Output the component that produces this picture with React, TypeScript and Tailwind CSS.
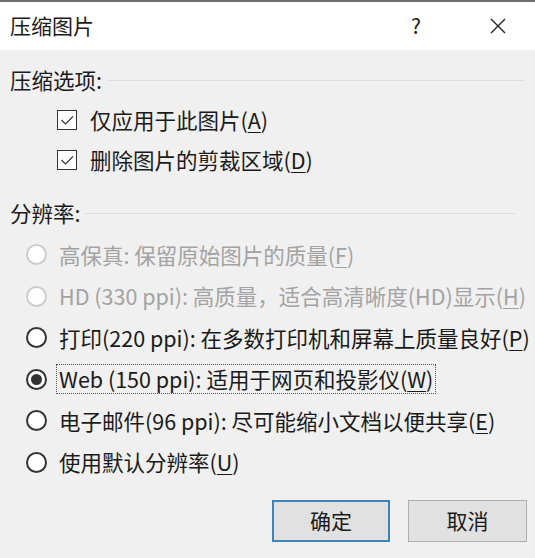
import React from "react";

const font = { fontFamily: '"Noto Sans CJK SC", "Noto Sans", sans-serif' };

function Check() {
  return (
    <span className="w-[20px] h-[20px] border border-[#333] bg-white flex items-center justify-center shrink-0">
      <svg width="18" height="18" viewBox="0 0 18 18">
        <path d="M3.5 9 L7.5 13 L15 5.5" fill="none" stroke="#333" strokeWidth="1.1" />
      </svg>
    </span>
  );
}

function Radio({ checked, disabled }: { checked?: boolean; disabled?: boolean }) {
  return (
    <span
      className={
        "w-[21px] h-[21px] rounded-full bg-white flex items-center justify-center shrink-0 border-2 " +
        (disabled ? "border-[#cccccc]" : "border-[#333333]")
      }
    >
      {checked && <span className="w-[11px] h-[11px] rounded-full bg-[#333333]" />}
    </span>
  );
}

function U({ children }: { children: React.ReactNode }) {
  return <span className="underline underline-offset-[3px] decoration-1">{children}</span>;
}

function RadioRow({
  children,
  checked,
  disabled,
  focus,
}: {
  children: React.ReactNode;
  checked?: boolean;
  disabled?: boolean;
  focus?: boolean;
}) {
  return (
    <div className="h-[41.5px] flex items-center pl-[26px]">
      <Radio checked={checked} disabled={disabled} />
      <span
        className={
          "ml-[9px] h-[30px] flex items-center px-[2px] " +
          (focus ? "border border-dotted border-[#555]" : "border border-transparent") +
          (disabled ? " text-[#a3a3a3]" : " text-[#1a1a1a]")
        }
      >
        {children}
      </span>
    </div>
  );
}

export default function App() {
  return (
    <div className="w-[535px] h-[558px] bg-[#f0f0f0] flex flex-col overflow-hidden" style={font}>
      <div className="h-[2px] bg-[#6e6e6e]" />
      <div className="h-[48px] bg-white flex items-center pl-[10px] text-[21px] text-[#1a1a1a]">
        <span>压缩图片</span>
        <span className="ml-auto text-[21px] mr-[69px]">?</span>
        <svg width="16" height="16" viewBox="0 0 16 16" className="mr-[29px]">
          <path d="M1 1 L15 15 M15 1 L1 15" stroke="#222" strokeWidth="1.4" />
        </svg>
      </div>
      <div className="flex flex-col text-[21.5px] text-[#1a1a1a] pt-[10px]">
        <div className="h-[40px] flex items-center pl-[10px] pr-[10px]">
          <span>压缩选项:</span>
          <span className="flex-1 h-px bg-[#dcdcdc] ml-[5px]" />
        </div>
        <div className="h-[40px] flex items-center pl-[57px]">
          <Check />
          <span className="ml-[13px]">
            仅应用于此图片(<U>A</U>)
          </span>
        </div>
        <div className="h-[40px] flex items-center pl-[57px]">
          <Check />
          <span className="ml-[13px]">
            删除图片的剪裁区域(<U>D</U>)
          </span>
        </div>
        <div className="h-[40px] mt-[13px] flex items-center pl-[10px] pr-[20px]">
          <span>分辨率:</span>
          <span className="flex-1 h-px bg-[#dcdcdc] ml-[5px]" />
        </div>
        <div className="mt-[1px]">
          <RadioRow disabled>
            高保真: 保留原始图片的质量(<U>F</U>)
          </RadioRow>
          <RadioRow disabled>
            HD (330 ppi): 高质量，适合高清晰度(HD)显示(<U>H</U>)
          </RadioRow>
          <RadioRow>
            打印(220 ppi): 在多数打印机和屏幕上质量良好(<U>P</U>)
          </RadioRow>
          <RadioRow checked focus>
            Web (150 ppi): 适用于网页和投影仪(<U>W</U>)
          </RadioRow>
          <RadioRow>
            电子邮件(96 ppi): 尽可能缩小文档以便共享(<U>E</U>)
          </RadioRow>
          <RadioRow>
            使用默认分辨率(<U>U</U>)
          </RadioRow>
        </div>
        <div className="flex justify-end gap-[18px] pr-[8px] mt-[17px]">
          <button className="w-[118px] h-[42px] bg-[#e1e1e1] border-2 border-[#3d85b8] text-[21px] text-[#1a1a1a] flex items-center justify-center">
            确定
          </button>
          <button className="w-[119px] h-[42px] bg-[#e1e1e1] border border-[#adadad] text-[21px] text-[#1a1a1a] flex items-center justify-center">
            取消
          </button>
        </div>
      </div>
    </div>
  );
}
